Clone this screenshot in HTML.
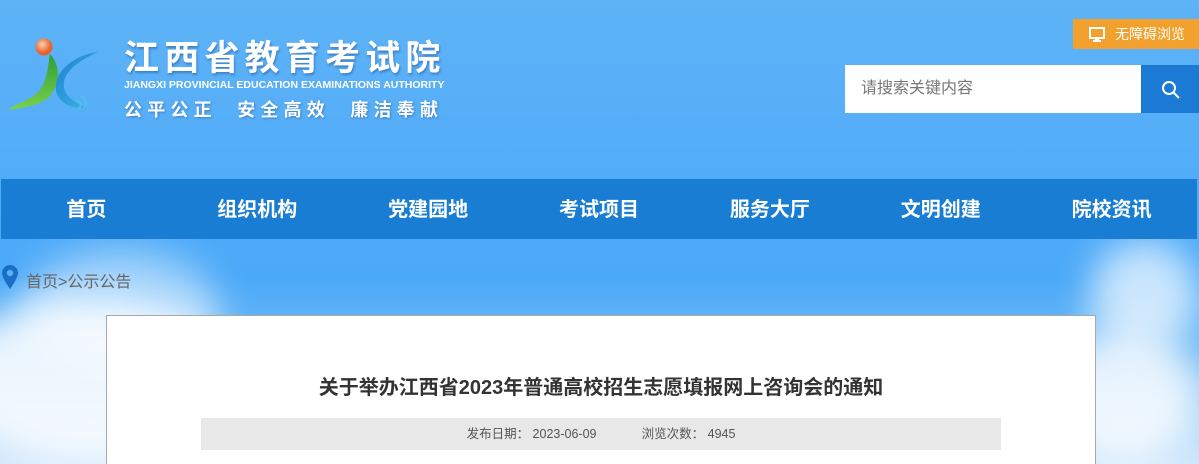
<!DOCTYPE html>
<html><head><meta charset="utf-8">
<style>
*{margin:0;padding:0;box-sizing:border-box}
html,body{width:1199px;height:464px;overflow:hidden}
body{font-family:"Liberation Sans","Noto Sans CJK SC",sans-serif}
#w{position:relative;width:1199px;height:464px;overflow:hidden;
background:linear-gradient(180deg,#5eb3f7 0%,#52acf8 40%,#4aa9f8 60%,#6fbaf6 75%,#cfe6fb 100%);}
.cloud{position:absolute;border-radius:50%;filter:blur(18px);background:rgba(255,255,255,.85)}
.logo-t{position:absolute;left:124px;top:30px;color:#fff;font-weight:bold;font-size:35px;letter-spacing:5.2px;text-shadow:1px 2px 2px rgba(40,80,150,.5)}
.logo-e{position:absolute;left:124px;top:79px;color:#fff;font-weight:bold;font-size:10.5px;white-space:nowrap}
.logo-s{position:absolute;left:124px;top:96px;color:#fff;font-weight:bold;font-size:18px;letter-spacing:5.2px;white-space:nowrap;text-shadow:1px 1px 2px rgba(40,80,150,.5)}
.acc{position:absolute;left:1073px;top:19px;width:126px;height:30px;background:#f3a12e;color:#fff;font-size:14px;line-height:30px;padding-left:42px}
.search{position:absolute;left:845px;top:65px;width:296px;height:48px;background:#fff;color:#777;font-size:16px;line-height:48px;padding-left:16px}
.sbtn{position:absolute;left:1141px;top:65px;width:58px;height:48px;background:#1a7ad4}
.nav{position:absolute;left:1px;top:179px;width:1196px;height:60px;background:#1a7dd4;display:flex}
.nav div{flex:1;text-align:center;color:#fff;font-weight:bold;font-size:20px;line-height:62px}
.crumb{position:absolute;left:26px;top:268px;color:#666;font-size:16px}
.card{position:absolute;left:106px;top:315px;width:990px;height:149px;background:#fff;border:1px solid #a8a8a8;border-bottom:none}
.title{position:absolute;left:0;width:100%;top:55px;text-align:center;font-size:20px;font-weight:bold;color:#333}
.meta{position:absolute;left:94px;top:102px;width:800px;height:32px;background:#e8e8e8;text-align:center;font-size:12.5px;line-height:32px;color:#555}
</style></head><body><div id="w">
<div class="cloud" style="left:-60px;top:300px;width:300px;height:164px"></div>
<div class="cloud" style="left:20px;top:250px;width:200px;height:120px;background:rgba(255,255,255,.5)"></div>
<div class="cloud" style="left:1090px;top:240px;width:109px;height:110px;background:rgba(255,255,255,.7)"></div>
<div class="cloud" style="left:1050px;top:330px;width:149px;height:134px;background:rgba(255,255,255,.8)"></div>

<svg style="position:absolute;left:0;top:30px" width="110" height="95" viewBox="0 0 110 95">
<defs><radialGradient id="o" cx=".4" cy=".35"><stop offset="0" stop-color="#ffd0b0"/><stop offset="1" stop-color="#e8622a"/></radialGradient>
<linearGradient id="g" x1="0" y1="0" x2="0" y2="1"><stop offset="0" stop-color="#2e9e3a"/><stop offset="1" stop-color="#7ad04a"/></linearGradient>
<linearGradient id="b" x1="0" y1="0" x2="1" y2="1"><stop offset="0" stop-color="#1f7fd0"/><stop offset="1" stop-color="#3ab8e8"/></linearGradient></defs>
<path d="M50 24 C60 34 62 55 48 68 C38 76 22 78 8 80 C18 72 32 70 40 60 C48 48 48 34 50 24Z" fill="url(#g)"/>
<path d="M98 22 C78 24 58 38 56 54 C54 68 66 80 88 78 C72 72 62 64 64 52 C66 40 80 30 98 22Z" fill="url(#b)"/>
<path d="M80 66 C86 68 88 72 84 78 M76 70 C82 72 82 76 78 80" stroke="#4fc0ea" stroke-width="2" fill="none"/>
<circle cx="44" cy="17" r="8.5" fill="url(#o)"/>
</svg>
<div class="logo-t">江西省教育考试院</div>
<div class="logo-e">JIANGXI PROVINCIAL EDUCATION EXAMINATIONS AUTHORITY</div>
<div class="logo-s">公平公正&nbsp;&nbsp;安全高效&nbsp;&nbsp;廉洁奉献</div>

<div class="acc"><svg style="position:absolute;left:16px;top:8px" width="16" height="15" viewBox="0 0 16 15"><rect x="1" y="1" width="14" height="10" fill="none" stroke="#fff" stroke-width="2"/><rect x="6" y="11" width="4" height="2" fill="#fff"/><rect x="4" y="13" width="8" height="2" fill="#fff"/></svg>无障碍浏览</div>
<div class="search">请搜索关键内容</div>
<div class="sbtn"><svg style="position:absolute;left:20px;top:15px" width="20" height="20" viewBox="0 0 20 20"><circle cx="8" cy="8" r="6" fill="none" stroke="#fff" stroke-width="2"/><path d="M12.5 12.5 L18 18" stroke="#fff" stroke-width="2"/></svg></div>

<div class="nav"><div>首页</div><div>组织机构</div><div>党建园地</div><div>考试项目</div><div>服务大厅</div><div>文明创建</div><div>院校资讯</div></div>

<svg style="position:absolute;left:2px;top:265px" width="16" height="25" viewBox="0 0 16 25"><path d="M8 0 C3.5 0 0 3.5 0 8 C0 13 8 24 8 24 C8 24 16 13 16 8 C16 3.5 12.5 0 8 0Z" fill="#1a6fc4"/><circle cx="8" cy="8" r="3.2" fill="#5ab0f5"/></svg>
<div class="crumb">首页&gt;公示公告</div>

<div class="card">
<div class="title">关于举办江西省2023年普通高校招生志愿填报网上咨询会的通知</div>
<div class="meta">发布日期：&nbsp;2023-06-09&nbsp;&nbsp;&nbsp;&nbsp;&nbsp;&nbsp;&nbsp;&nbsp;&nbsp;&nbsp;&nbsp;&nbsp;&nbsp;浏览次数：&nbsp;4945</div>
</div>
</div></body></html>
